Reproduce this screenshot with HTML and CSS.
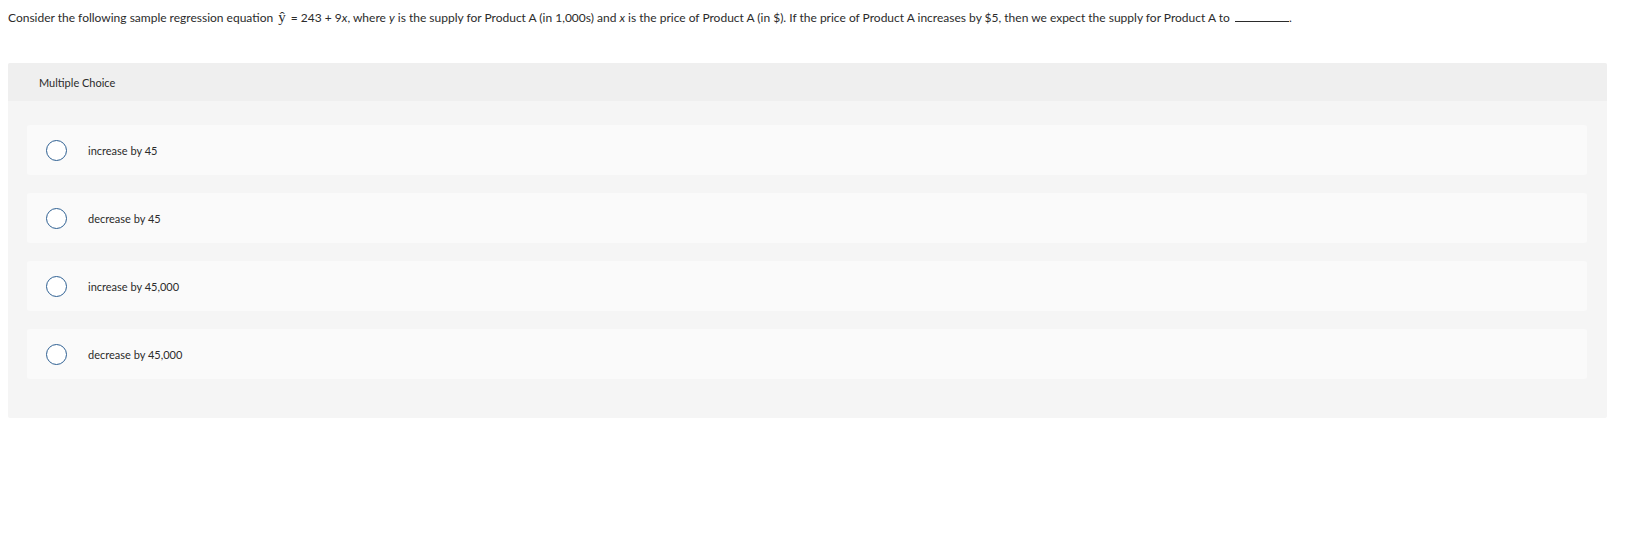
FILE: index.html
```html
<!DOCTYPE html>
<html>
<head>
<meta charset="utf-8">
<link rel="stylesheet" href="styles.css">
</head>
<body>
<p class="question">Consider the following sample regression equation <span class="yhat">ŷ</span> = 243 + 9<i>x</i>, where <i>y</i> is the supply for Product A (in 1,000s) and <i>x</i> is the price of Product A (in $). If the price of Product A increases by $5, then we expect the supply for Product A to <span class="blank"></span>.</p>
<section class="panel">
  <div class="panel-head">Multiple Choice</div>
  <div class="choices">
    <label class="choice"><span class="radio"></span><span class="choice-text">increase by 45</span></label>
    <label class="choice"><span class="radio"></span><span class="choice-text">decrease by 45</span></label>
    <label class="choice"><span class="radio"></span><span class="choice-text">increase by 45,000</span></label>
    <label class="choice"><span class="radio"></span><span class="choice-text">decrease by 45,000</span></label>
  </div>
</section>
</body>
</html>
```

FILE: styles.css
```css
body {
  margin: 8px;
  background: #ffffff;
  font-family: Lato, "Open Sans", sans-serif;
  color: #2b2b2b;
}
.question {
  margin: 0;
  font-size: 12px;
  line-height: 18px;
}
.question i {
  font-style: italic;
}
.yhat {
  font-family: "Liberation Serif", serif;
  font-size: 15px;
  margin: 0 2px;
}
.blank {
  display: inline-block;
  width: 54px;
  border-bottom: 1px solid #2b2b2b;
  margin-left: 2px;
}
.panel {
  margin: 36px 15px 0 0;
  background: #f5f5f5;
  border-radius: 2px;
}
.panel-head {
  height: 38px;
  display: flex;
  align-items: center;
  padding-left: 31px;
  background: #efefef;
  font-size: 11px;
  border-radius: 2px 2px 0 0;
}
.choices {
  display: flex;
  flex-direction: column;
  gap: 18px;
  padding: 24px 20px 39px 19px;
}
.choice {
  height: 50px;
  display: flex;
  align-items: center;
  padding-left: 19px;
  background: #fafafa;
  border-radius: 3px;
  font-size: 11px;
}
.radio {
  width: 19px;
  height: 19px;
  border: 1.5px solid #2d5f92;
  border-radius: 50%;
  background: #ffffff;
  margin-right: 21px;
  flex: none;
}
```
